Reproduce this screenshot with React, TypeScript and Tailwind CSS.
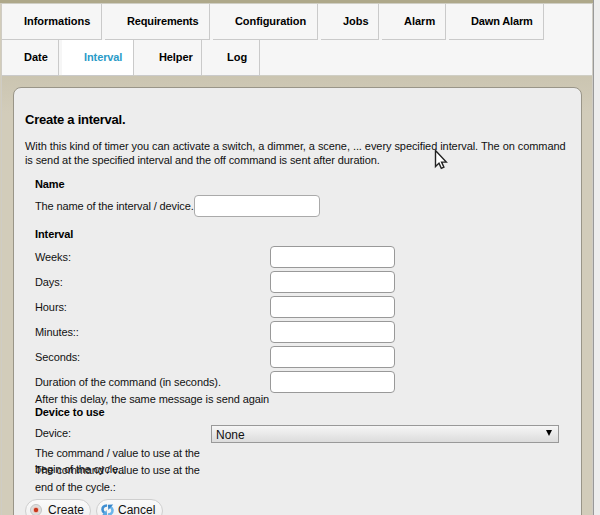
import type { ReactNode } from "react";

function Tab({ label, className, active }: { label: string; className: string; active?: boolean }) {
  return (
    <div
      className={`h-9 shrink-0 border-r border-b border-[#cacaca] pl-[22px] text-[11px] leading-[34px] font-bold whitespace-nowrap ${
        active ? "bg-white text-[#2a9bc8]" : "bg-[#f6f6f6] text-black"
      } ${className}`}
    >
      {label}
    </div>
  );
}

function Field({ label }: { label: string }) {
  return (
    <label className="flex h-[25px] items-center">
      <span className="w-[235px] pt-px">{label}</span>
      <input className="h-[22px] w-[125px] rounded-[4px] border border-[#999] bg-white" />
    </label>
  );
}

function PillButton({ icon, label, className }: { icon: ReactNode; label: string; className: string }) {
  return (
    <button
      className={`flex h-6 items-center rounded-full border border-[#cfcfcf] bg-linear-to-b from-[#fafafa] to-[#efefef] pb-[2px] pl-[4px] text-[12px] whitespace-nowrap ${className}`}
    >
      {icon}
      {label}
    </button>
  );
}

function RecordIcon() {
  return (
    <svg width="12" height="12" viewBox="0 0 12 12" className="shrink-0">
      <circle cx="6" cy="6" r="5.5" fill="#dedede" stroke="#c4c4c4" />
      <circle cx="6" cy="6" r="3.2" fill="#ecc8bf" />
      <circle cx="6" cy="6" r="2.2" fill="#c8371d" />
    </svg>
  );
}

function RefreshIcon() {
  return (
    <svg width="13" height="12" viewBox="0 0 13 12" className="shrink-0">
      <path d="M6 1.500C3.300 1.600 1.500 3.300 1.500 5.500c0 1.400.7 2.600 2 3.500" fill="none" stroke="#3f8fd2" strokeWidth="2.600" />
      <path d="M.8 11.500 6.200 11.300 5.600 6Z" fill="#5aa9e2" />
      <path d="M7 10.500c2.700-.1 4.500-1.800 4.500-4 0-1.400-.7-2.600-2-3.500" fill="none" stroke="#6bb6ea" strokeWidth="2.600" />
      <path d="M12.200.5 6.800.7 7.400 6Z" fill="#3585ca" />
    </svg>
  );
}

export default function App() {
  return (
    <div className="relative flex h-[515px] w-[600px] overflow-hidden bg-[#ededed] font-['Liberation_Sans',Arial,sans-serif] text-[11px] text-[#111]">
      <div className="flex w-[594px] flex-col border-r border-[#999] bg-[#d2ccba]">
        <div className="h-[3px] shrink-0 bg-[#aea88a]" />
        <div className="ml-px flex min-h-0 flex-1 flex-col border-r border-l border-[#cfccc4] bg-linear-to-b from-[#bdb79f] to-[#d2ccba] to-[110px]">
          <nav className="h-[73px] shrink-0 border-t border-b border-[#cfcec4] bg-[#f6f6f6]">
            <div className="flex gap-[3px]">
              <Tab label="Informations" className="w-[100px] tracking-[-0.03px]" />
              <Tab label="Requirements" className="w-[105px] tracking-[-0.15px]" />
              <Tab label="Configuration" className="w-[105px] tracking-[-0.08px]" />
              <Tab label="Jobs" className="w-[58px]" />
              <Tab label="Alarm" className="w-[64px]" />
              <Tab label="Dawn Alarm" className="w-[95px] tracking-[-0.15px]" />
            </div>
            <div className="flex gap-[3px]">
              <Tab label="Date" className="w-[57px]" />
              <Tab label="Interval" className="w-[72px] tracking-[-0.1px]" active />
              <Tab label="Helper" className="w-[65px] tracking-[-0.1px]" />
              <Tab label="Log" className="w-[55px]" />
            </div>
          </nav>

          <main className="mt-[11px] mr-[10px] ml-[11px] h-[470px] shrink-0 rounded-[8px] border border-[#999588] bg-[#ededed] pt-[24px] pl-[11px]">
            <h1 className="h-4 text-[13px] leading-4 font-bold tracking-[-0.25px] text-black">Create a interval.</h1>
            <p className="mt-[11px] leading-[14px] tracking-[-0.067px] whitespace-nowrap">
              With this kind of timer you can activate a switch, a dimmer, a scene, ... every specified interval. The on command
              <br />
              <span className="tracking-[-0.1px]">
                is send at the specified interval and the off command is sent after duration.
              </span>
            </p>

            <div className="pl-[10px] tracking-[-0.1px]">
              <h2 className="mt-[10px] h-[14px] leading-[14px] font-bold text-black">Name</h2>
              <label className="mt-[2px] flex h-[25px] items-center">
                <span className="w-[159px] pt-px tracking-[-0.12px] whitespace-nowrap">The name of the interval / device.</span>
                <input className="h-[22px] w-[126px] rounded-[4px] border border-[#aaa] bg-white" />
              </label>

              <h2 className="mt-[9px] h-[14px] leading-[14px] font-bold text-black">Interval</h2>
              <div className="mt-[3px]">
                <Field label="Weeks:" />
                <Field label="Days:" />
                <Field label="Hours:" />
                <Field label="Minutes::" />
                <Field label="Seconds:" />
                <Field label="Duration of the command (in seconds)." />
              </div>
              <p className="h-[11px] leading-[10px]">After this delay, the same message is send again</p>

              <h2 className="h-[14px] leading-[14px] font-bold text-black">Device to use</h2>
              <div className="mt-[3px] flex h-[23px] items-start">
                <span className="w-[176px] pt-[3px] leading-[16px]">Device:</span>
                <div className="mt-[3px] flex h-[18px] w-[348px] items-center justify-between border border-[#999] bg-linear-to-b from-[#f6f6f6] to-[#dcdcdc] pr-[6px] pl-[4px] text-[12px] tracking-normal">
                  <span className="pt-px">None</span>
                  <svg width="6" height="6" viewBox="0 0 6 6" className="mb-[2px]">
                    <path d="M0 0h6L3 6z" fill="#000" />
                  </svg>
                </div>
              </div>
              <p className="h-[17px] w-[175px] leading-[16px] tracking-[-0.14px]">
                The command / value to use at the begin of the cycle.:
              </p>
              <p className="h-[34px] w-[175px] leading-[17px] tracking-[-0.14px]">
                The command / value to use at the end of the cycle.:
              </p>
            </div>

            <div className="mt-[3px] flex gap-[5px]">
              <PillButton label="Create" icon={<RecordIcon />} className="w-[66px] gap-[6px]" />
              <PillButton label="Cancel" icon={<RefreshIcon />} className="w-[67px] gap-[4px]" />
            </div>
          </main>
        </div>
      </div>

      <svg className="absolute top-[149px] left-[434px]" width="15" height="21" viewBox="0 0 15 21">
        <path d="M1.500 1.500v16l3.500-3.400 2.300 5.200 2.600-1.200-2.300-5h4.700Z" fill="#fff" stroke="#222" strokeWidth="1.400" />
      </svg>
    </div>
  );
}
